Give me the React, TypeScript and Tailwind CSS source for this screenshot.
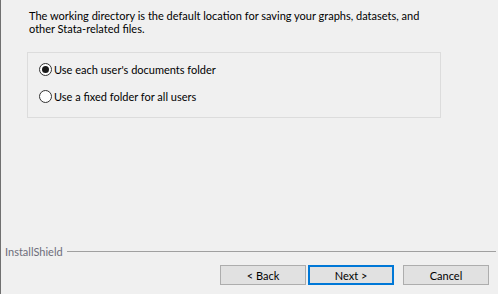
import React from 'react';

const font = { fontFamily: 'Lato, "Segoe UI", sans-serif' };

function Radio({ checked, label }: { checked: boolean; label: string }) {
  return (
    <div className="flex items-center h-[13px]">
      <span className="w-[13px] h-[13px] rounded-full border border-[#333333] bg-white flex items-center justify-center shrink-0">
        {checked && <span className="w-[7px] h-[7px] rounded-full bg-[#1a1a1a]" />}
      </span>
      <span className="ml-[2px] text-[11px] leading-[13px] text-black">{label}</span>
    </div>
  );
}

function Button({ label, primary }: { label: string; primary?: boolean }) {
  return (
    <button
      className={`w-[86px] h-[20px] bg-[#e1e1e1] text-[11px] leading-none text-black flex items-center justify-center ${
        primary ? 'border-2 border-[#0078d7]' : 'border border-[#adadad]'
      }`}
    >
      {label}
    </button>
  );
}

export default function App() {
  return (
    <div className="w-[498px] h-[294px] bg-[#f0f0f0] border-l border-[#707070] flex flex-col" style={font}>
      <div className="pl-[28px] pt-[9px]">
        <p className="text-[11px] leading-[13px] text-black whitespace-nowrap">
          The working directory is the default location for saving your graphs, datasets, and
          <br />
          other Stata-related files.
        </p>
      </div>

      <div className="ml-[26px] mt-[17px] w-[414px] h-[66px] border border-[#dcdcdc] pl-[11px] pt-[10px] flex flex-col gap-[14px]">
        <Radio checked label="Use each user's documents folder" />
        <Radio checked={false} label="Use a fixed folder for all users" />
      </div>

      <div className="mt-auto flex items-center h-[13px] pl-[4px] pr-[2px]">
        <span className="text-[11px] leading-[13px] text-[#6d6d7a]">InstallShield</span>
        <div className="flex-1 h-px bg-[#a0a0a0] ml-[4px]" />
      </div>

      <div className="mt-[7px] mb-[9px] flex justify-end pr-[9px]">
        <div className="flex gap-[2px]">
          <Button label="< Back" />
          <Button label="Next >" primary />
        </div>
        <div className="ml-[9px]">
          <Button label="Cancel" />
        </div>
      </div>
    </div>
  );
}
